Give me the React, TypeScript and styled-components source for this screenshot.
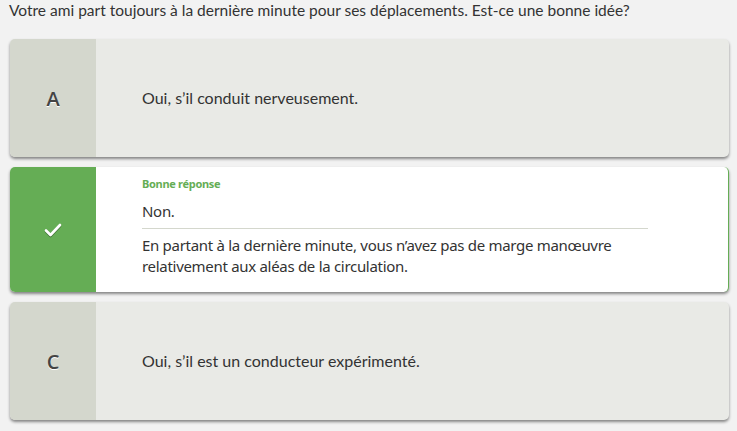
import React from "react";
import styled, { createGlobalStyle } from "styled-components";

const Global = createGlobalStyle`
  html, body { margin: 0; padding: 0; background: #f2f2f2; }
  body { font-family: Lato, "Open Sans", sans-serif; color: #333; }
`;

const Page = styled.div`
  padding: 0 8px 10px 10px;
  display: flex;
  flex-direction: column;
  gap: 10px;
`;

const Question = styled.p`
  margin: 0 0 9px -1px;
  font-family: Lato, sans-serif;
  font-size: 15.5px;
  line-height: 20px;
  color: #333;
`;

const Card = styled.div<{ $correct?: boolean }>`
  display: flex;
  border-radius: 5px;
  overflow: hidden;
  background: ${(p) => (p.$correct ? "#ffffff" : "#e9eae6")};
  box-shadow: 0 2px 3px rgba(0, 0, 0, 0.45);
  min-height: 118px;
  ${(p) => (p.$correct ? "border-right: 1px solid #65ad55;" : "")}
`;

const Badge = styled.div<{ $correct?: boolean }>`
  width: 86px;
  flex: none;
  display: flex;
  align-items: center;
  justify-content: center;
  background: ${(p) => (p.$correct ? "#65ad55" : "#d4d7cd")};
  font-family: "Open Sans", sans-serif;
  font-size: 20px;
  font-weight: 600;
  color: #444;
  text-shadow: 0 1px 0 #fff;
`;

const Body = styled.div`
  flex: 1;
  display: flex;
  flex-direction: column;
  justify-content: center;
  padding: 0 0 0 46px;
`;

const Answer = styled.div`
  font-family: Lato, sans-serif;
  font-size: 16px;
  line-height: 20px;
  color: #333;
`;

const CorrectBody = styled.div`
  flex: 1;
  display: flex;
  flex-direction: column;
  padding: 9px 0 15px 46px;
`;

const Content = styled.div`
  width: 506px;
  display: flex;
  flex-direction: column;
  font-family: "Noto Sans", "Open Sans", sans-serif;
  color: #333;
`;

const Label = styled.div`
  font-size: 11px;
  line-height: 16px;
  font-weight: 700;
  color: #65ad55;
  letter-spacing: -0.3px;
`;

const Main = styled.div`
  margin-top: 9px;
  font-size: 15px;
  line-height: 20px;
  letter-spacing: -0.3px;
`;

const Rule = styled.hr`
  margin: 7px 0 0;
  border: none;
  border-top: 1px solid #d4d7cd;
`;

const Explain = styled.div`
  margin-top: 6px;
  font-size: 15px;
  line-height: 21px;
  letter-spacing: -0.3px;
`;

const Check = () => (
  <svg width="18" height="14" viewBox="0 0 18 14" style={{ filter: "drop-shadow(0 1px 0 rgba(0,0,0,0.35))" }}>
    <path d="M2 7.5 L6.5 12 L16 2" fill="none" stroke="#fff" strokeWidth="2.6" strokeLinecap="round" strokeLinejoin="round" />
  </svg>
);

export default function App() {
  return (
    <>
      <Global />
      <Page>
        <Question>
          Votre ami part toujours à la dernière minute pour ses déplacements. Est-ce une bonne idée?
        </Question>
        <Card>
          <Badge>A</Badge>
          <Body>
            <Answer>Oui, s’il conduit nerveusement.</Answer>
          </Body>
        </Card>
        <Card $correct>
          <Badge $correct>
            <Check />
          </Badge>
          <CorrectBody>
            <Content>
              <Label>Bonne réponse</Label>
              <Main>Non.</Main>
              <Rule />
              <Explain>
                En partant à la dernière minute, vous n’avez pas de marge manœuvre relativement aux aléas de la circulation.
              </Explain>
            </Content>
          </CorrectBody>
        </Card>
        <Card>
          <Badge>C</Badge>
          <Body>
            <Answer>Oui, s’il est un conducteur expérimenté.</Answer>
          </Body>
        </Card>
      </Page>
    </>
  );
}
